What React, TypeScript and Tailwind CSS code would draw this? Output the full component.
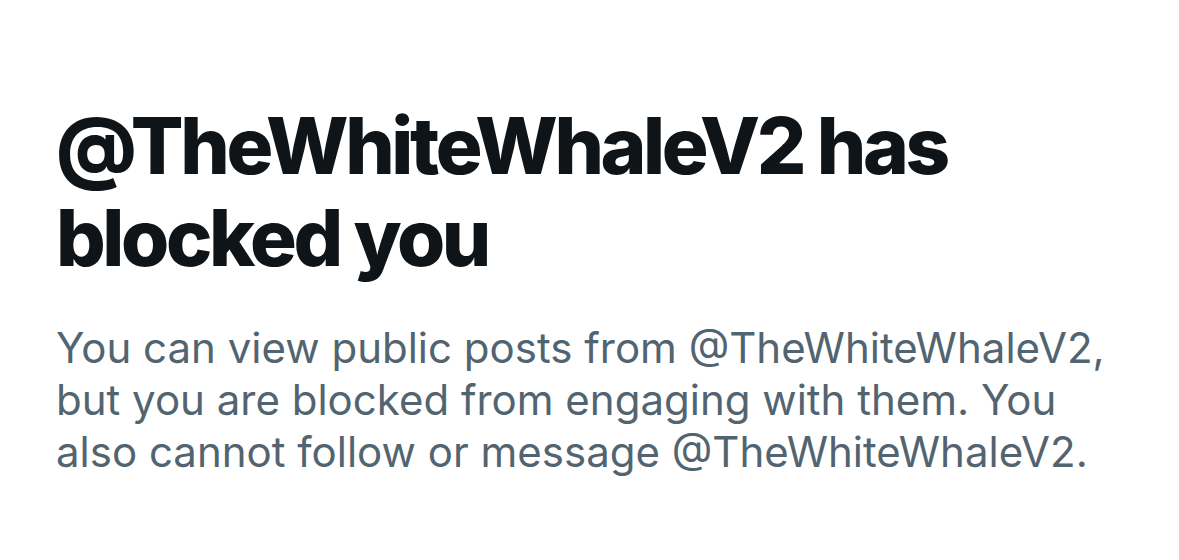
export default function App() {
  return (
    <div className="w-[1179px] h-[560px] bg-white overflow-hidden">
      <div className="pl-[56px] pt-[100px] w-[1120px]">
        <h1 className="text-[78px] leading-[92px] font-extrabold text-[#0f1419] tracking-[-3.4px]" style={{ fontFamily: "Inter, 'Liberation Sans', sans-serif" }}>
          @TheWhiteWhaleV2 has
          <br />
          blocked you
        </h1>
        <p className="mt-[38px] text-[42px] leading-[52px] text-[#536471] tracking-[0px]" style={{ fontFamily: "Inter, 'Liberation Sans', sans-serif" }}>
          You can view public posts from @TheWhiteWhaleV2,
          <br />
          but you are blocked from engaging with them. You
          <br />
          also cannot follow or message @TheWhiteWhaleV2.
        </p>
      </div>
    </div>
  );
}
